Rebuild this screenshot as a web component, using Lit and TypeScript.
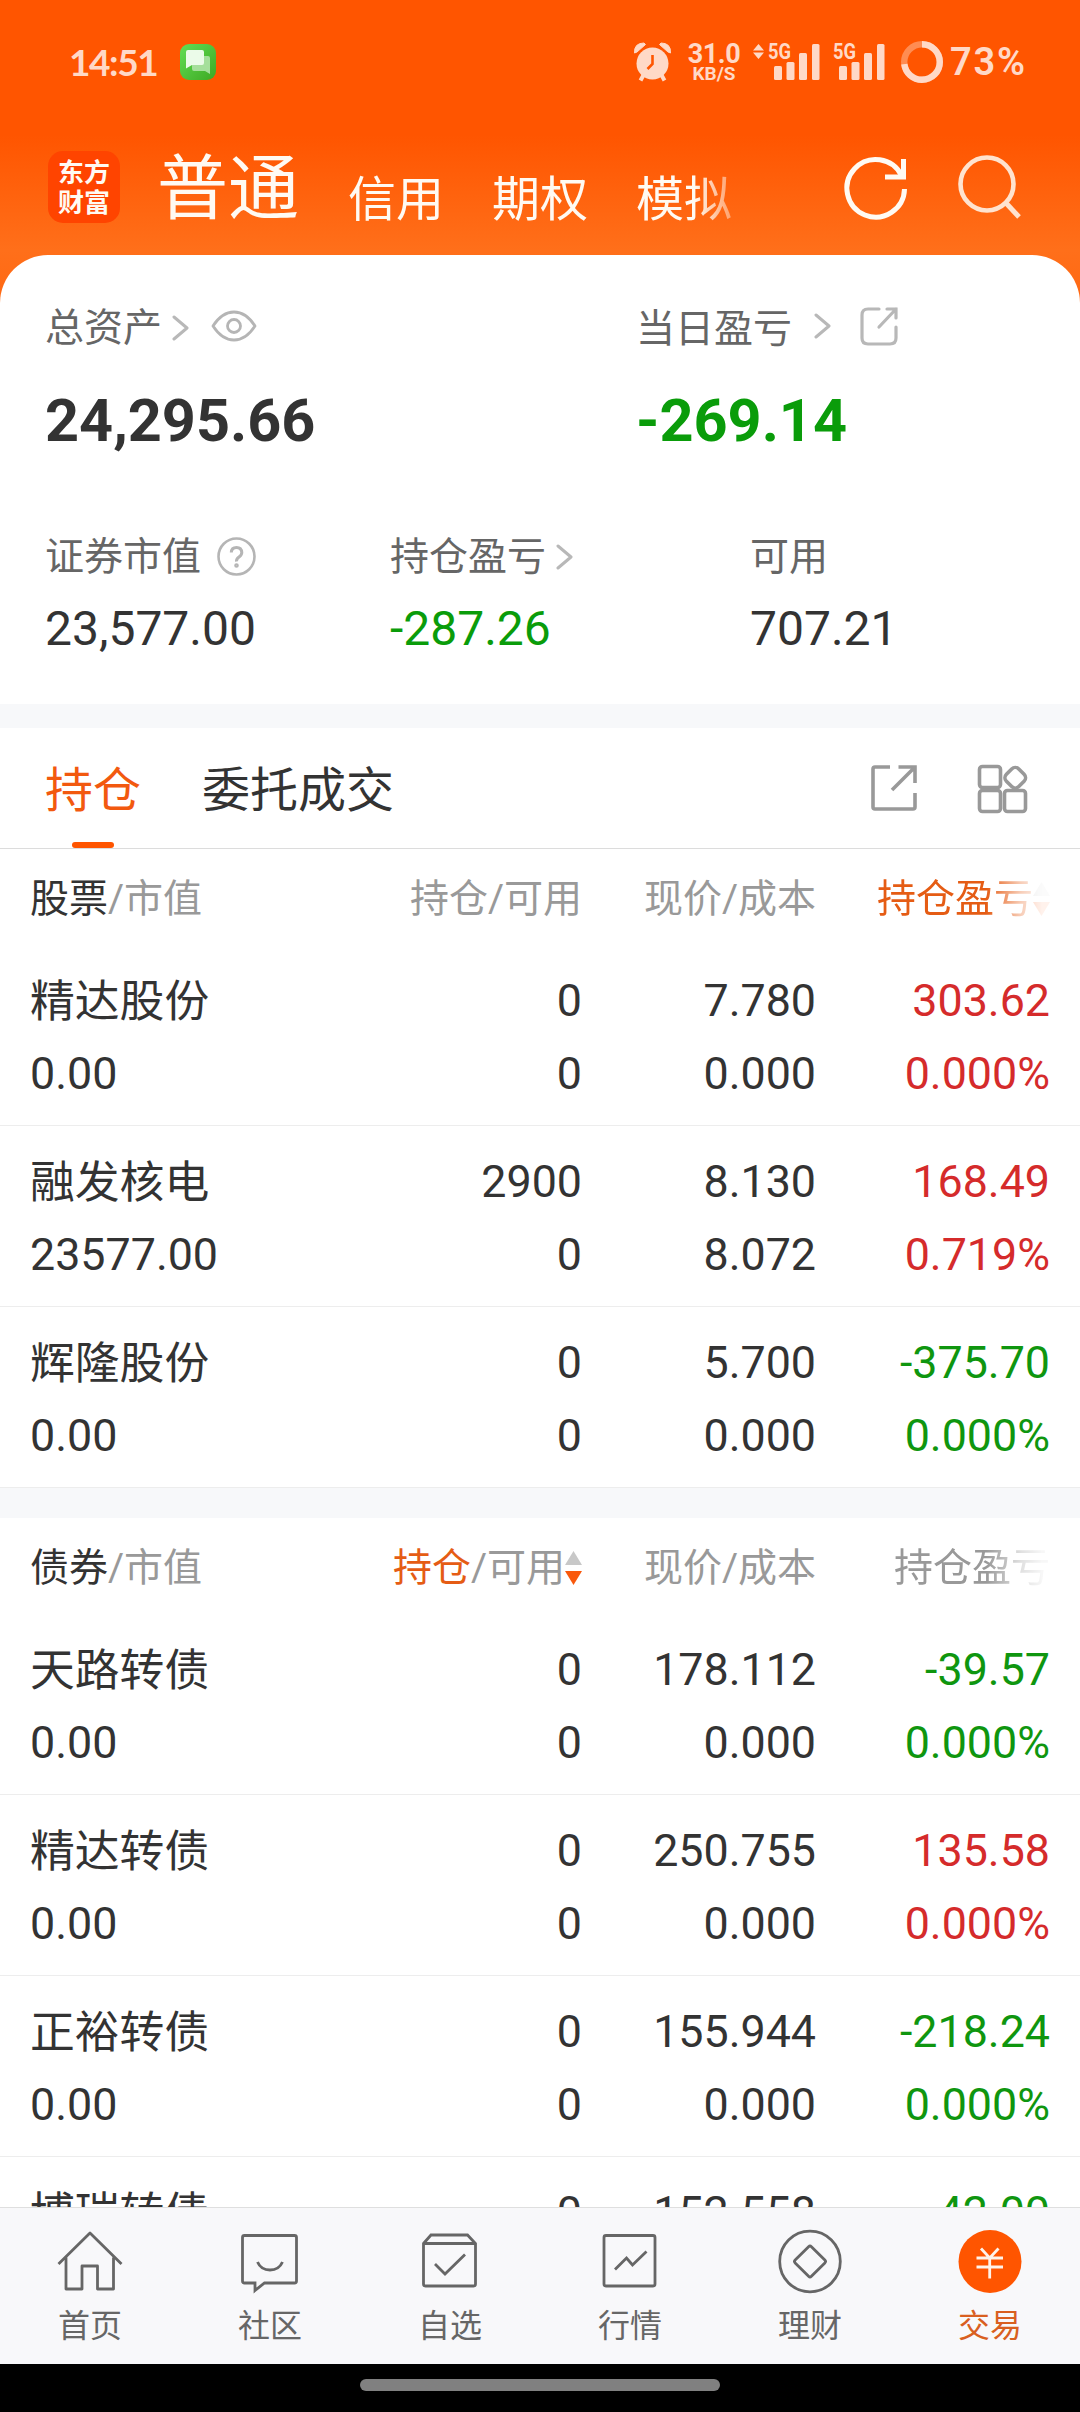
import { LitElement, html, svg, css, nothing } from "lit";
import { customElement, property } from "lit/decorators.js";
import { classMap } from "lit/directives/class-map.js";

type Tone = "up" | "down";

interface Holding {
  name: string;
  value: string;
  held: string;
  usable: string;
  price: string;
  cost: string;
  profit: string;
  rate: string;
  tone: Tone;
}

const row = (
  name: string, value: string, held: string, price: string, cost: string,
  profit: string, rate: string, tone: Tone, usable = "0",
): Holding => ({ name, value, held, usable, price, cost, profit, rate, tone });

const STOCKS: Holding[] = [
  row("精达股份", "0.00", "0", "7.780", "0.000", "303.62", "0.000%", "up"),
  row("融发核电", "23577.00", "2900", "8.130", "8.072", "168.49", "0.719%", "up"),
  row("辉隆股份", "0.00", "0", "5.700", "0.000", "-375.70", "0.000%", "down"),
];

const BONDS: Holding[] = [
  row("天路转债", "0.00", "0", "178.112", "0.000", "-39.57", "0.000%", "down"),
  row("精达转债", "0.00", "0", "250.755", "0.000", "135.58", "0.000%", "up"),
  row("正裕转债", "0.00", "0", "155.944", "0.000", "-218.24", "0.000%", "down"),
  row("博瑞转债", "", "0", "152.558", "", "-42.00", "", "down", ""),
];

const FONT = css`Roboto, "Noto Sans CJK SC", sans-serif`;

const chevron = html`<svg class="chevron" width="18" height="28" viewBox="0 0 18 28">
  <path d="M2 3 L15 14 L2 25" fill="none" stroke="#b8b8b8" stroke-width="3" stroke-linecap="round" stroke-linejoin="round"/>
</svg>`;

const sorter = html`<svg class="sorter" width="17" height="36" viewBox="0 0 17 36">
  <path d="M8.500 1 L17 15 H0Z" fill="#c8c8c8"/><path d="M8.500 35 L17 21 H0Z" fill="#f9590c"/>
</svg>`;

@customElement("status-bar")
export class StatusBar extends LitElement {
  static styles = css`
    :host { display: flex; align-items: flex-start; height: 84px; padding-top: 40px; box-sizing: border-box;
      color: #ffd9c7; font-family: Roboto, sans-serif; font-weight: 600; }
    svg { display: block; flex: none; }
    .time { width: 110px; margin-left: 69px; font: 700 37px/43px Lato, sans-serif; letter-spacing: -1.4px; }
    .chat { margin: 4px auto 0 1px; }
    .speed { width: 54px; margin: 2px 12px 0 14px; text-align: center; font-weight: 700; }
    .rate { font-size: 27px; line-height: 25px; letter-spacing: -0.4px; }
    .unit { font-size: 19px; line-height: 14px; }
    .ring { margin-left: 14px; }
    .second { margin-left: 11px; }
    .percent { width: 130px; margin-left: 6px; font: 600 38px/45px Roboto, sans-serif; letter-spacing: 1.8px; }
  `;

  private signal(arrows: boolean) {
    return svg`
      ${arrows ? svg`<path d="M5.500 4 L11 10.500 H0Z M5.500 19 L11 12.500 H0Z" fill="#ffd9c7"/>` : nothing}
      <text x="15" y="19" font-family="Roboto" font-size="22" font-weight="700" textLength="23" lengthAdjust="spacingAndGlyphs" fill="#ffd9c7">5G</text>
      <rect x="21" y="26" width="8" height="14" rx="1.500" fill="#ffd9c7"/>
      <rect x="33.500" y="22" width="8" height="18" rx="1.500" fill="#ffd9c7"/>
      <rect x="46" y="13" width="8" height="27" rx="1.500" fill="#ffd9c7"/>
      <rect x="59" y="4" width="7.500" height="36" rx="1.500" fill="#ffd9c7"/>`;
  }

  render() {
    return html`
      <div class="time">14:51</div>
      <svg class="chat" width="36" height="36" viewBox="0 0 36 36">
        <defs><linearGradient id="g" x1="0" y1="0" x2="1" y2="1"><stop offset="0" stop-color="#62de55"/><stop offset="1" stop-color="#3ea922"/></linearGradient></defs>
        <rect width="36" height="36" rx="9" fill="url(#g)"/>
        <path d="M13 12 H28 Q30 12 30 14 V30 L25 27 H14 Q12 27 12 25 V14Z" fill="#a5df9b"/>
        <path d="M8 6 H22 Q24 6 24 8 V19 Q24 21 22 21 H12 L6 24.500 V8 Q6 6 8 6Z" fill="#ebfbe9"/>
      </svg>
      <svg width="40" height="42" viewBox="0 0 40 42" fill="#ffd9c7">
        <path d="M1.500 13 Q1 3 11 3 L12.500 4.500 L4 12Z M37.500 13 Q38 3 28 3 L26.500 4.500 L35 12Z" stroke="#ffd9c7" stroke-linejoin="round"/>
        <path d="M10.500 35 L7.500 40.500 M28.500 35 L31.500 40.500" stroke="#ffd9c7" stroke-width="4"/>
        <circle cx="19.500" cy="23.500" r="16"/>
        <path d="M19.500 15 V24 L14.500 29" fill="none" stroke="#ff5500" stroke-width="2.600"/>
      </svg>
      <div class="speed"><div class="rate">31.0</div><div class="unit">KB/S</div></div>
      <svg width="68" height="42" viewBox="0 0 68 42">${this.signal(true)}</svg>
      <svg class="second" width="54" height="42" viewBox="14 0 54 42">${this.signal(false)}</svg>
      <svg class="ring" width="44" height="44" viewBox="0 0 44 44">
        <circle cx="22" cy="22" r="17.800" fill="none" stroke="#ff8c52" stroke-width="6.400"/>
        <circle cx="22" cy="22" r="17.800" fill="none" stroke="#ffd9c7" stroke-width="6.400" pathLength="100" stroke-dasharray="73 27" transform="rotate(-90 22 22)"/>
      </svg>
      <div class="percent">73%</div>`;
  }
}

@customElement("app-header")
export class AppHeader extends LitElement {
  static styles = css`
    :host { display: flex; align-items: flex-start; height: 171px; padding-left: 48px; box-sizing: border-box;
      color: #fffaf3; font-family: ${FONT}; }
    .logo { width: 72px; height: 72px; margin-top: 67px; border-radius: 15px; background: #ff4400; box-sizing: border-box;
      padding-top: 7px; text-align: center; font-size: 26px; line-height: 30px; font-weight: 700; }
    .modes { display: flex; align-items: flex-start; gap: 48px; margin: 54px 0 0 36px; width: 640px;
      -webkit-mask-image: linear-gradient(to right, #000 538px, transparent 600px);
      mask-image: linear-gradient(to right, #000 538px, transparent 600px); }
    .mode { padding-top: 13px; font-size: 48px; line-height: 98px; }
    .current { width: 144px; padding: 1px 0 0 1px; margin-right: -1px; font-size: 71px; line-height: 100px; }
    .icons { display: block; margin: 66px 0 0 44px; }
  `;

  render() {
    return html`
      <div class="logo">东方<br>财富</div>
      <div class="modes">
        <span class="mode current">普通</span><span class="mode">信用</span>
        <span class="mode">期权</span><span class="mode">模拟</span>
      </div>
      <svg class="icons" width="190" height="76" viewBox="840 150 190 76" fill="none">
        <path d="M904.500 189 A28.800 28.800 0 1 1 901.500 175.500" stroke="#fffaf3" stroke-width="5"/>
        <path d="M885 177 H903.500 V159" stroke="#fffaf3" stroke-width="5"/>
        <circle cx="987" cy="184" r="26.500" stroke="#ffe3cf" stroke-width="4.600"/>
        <path d="M1006 203 L1019 217" stroke="#ffe3cf" stroke-width="5"/>
      </svg>`;
  }
}

@customElement("asset-summary")
export class AssetSummary extends LitElement {
  static styles = css`
    :host { display: block; height: 449px; padding: 49px 0 0 45px; box-sizing: border-box; background: #fff;
      border-radius: 48px 48px 0 0; color: #333; font-family: ${FONT}; }
    .main { display: grid; grid-template-columns: 591px 1fr; }
    .sub { display: grid; grid-template-columns: 345px 360px 1fr; margin-top: 77px; }
    .label { display: flex; align-items: center; height: 48px; font-size: 39px; line-height: 48px; color: #666; }
    .big { margin-top: 34px; font-size: 59.4px; line-height: 70px; font-weight: 700; }
    .value { margin-top: 20px; font-size: 48px; line-height: 56px; }
    .down { color: #0a9c0a; }
    .chevron { margin-left: 10px; }
    .wide { padding-top: 1px; height: 47px; }
    .wide .chevron { margin-left: 22px; margin-bottom: 5px; }
    .eye { margin: 0 0 5px 21px; }
    .export { margin: 0 0 5px 27px; }
    .help { margin-left: 14px; }
  `;

  render() {
    return html`
      <div class="main">
        <div>
          <div class="label">总资产${chevron}
            <svg class="eye" width="46" height="34" viewBox="0 0 46 34" fill="none" stroke="#b5b5b5" stroke-width="2.800">
              <path d="M2 17 Q11 3 23 3 T44 17 Q35 31 23 31 T2 17Z" stroke-linejoin="round"/><circle cx="23" cy="17" r="6.500"/>
            </svg>
          </div>
          <div class="big">24,295.66</div>
        </div>
        <div>
          <div class="label wide">当日盈亏${chevron}
            <svg class="export" width="40" height="40" viewBox="0 0 40 40" fill="none" stroke="#b8b8b8" stroke-width="3.200" stroke-linecap="round">
              <path d="M20 3 H9 Q3 3 3 9 V32 Q3 38 9 38 H31 Q37 38 37 32 V21"/>
              <path d="M28 3 H37 V12 M37 3 L20 21"/>
            </svg>
          </div>
          <div class="big down">-269.14</div>
        </div>
      </div>
      <div class="sub">
        <div>
          <div class="label">证券市值
            <svg class="help" width="42" height="42" viewBox="0 0 42 42" fill="none" stroke="#b5b5b5" stroke-width="2.600">
              <circle cx="21.500" cy="20.500" r="18"/>
              <path d="M16.300 16.500 Q16.500 11.500 21.500 11.500 T26.800 16.500 Q26.800 19 24 21 T21.500 25.500" stroke-width="3"/>
              <circle cx="21.500" cy="29.500" r="1" />
            </svg>
          </div>
          <div class="value">23,577.00</div>
        </div>
        <div><div class="label">持仓盈亏${chevron}</div><div class="value down">-287.26</div></div>
        <div><div class="label">可用</div><div class="value">707.21</div></div>
      </div>`;
  }
}

@customElement("position-tabs")
export class PositionTabs extends LitElement {
  static styles = css`
    :host { display: flex; height: 121px; padding: 0 50px 0 45px; box-sizing: border-box; background: #fff;
      border-bottom: 1px solid #dcdcdc; font-family: ${FONT}; color: #333; }
    .tab { display: flex; flex-direction: column; align-items: center; padding-top: 35px; margin-right: 61px;
      font-size: 48px; line-height: 56px; }
    .active { color: #f2590f; }
    .bar { width: 42px; height: 6px; margin-top: 23px; border-radius: 3px; background: #ff5500; }
    .tools { margin: 34px 0 0 auto; }
  `;

  render() {
    return html`
      <div class="tab active">持仓<span class="bar"></span></div>
      <div class="tab">委托成交</div>
      <svg class="tools" width="162" height="54" viewBox="868 762 162 54" fill="none" stroke="#999" stroke-width="3.600">
        <path d="M890 767 H875 Q873 767 873 769 V807 Q873 809 875 809 H913 Q915 809 915 807 V793"/>
        <path d="M898.500 767 H915 V783 M915 767 L892 790"/>
        <rect x="979.500" y="766.500" width="21" height="21" rx="3"/>
        <rect x="979.500" y="790.500" width="21" height="21" rx="3"/>
        <rect x="1004.500" y="790.500" width="21" height="21" rx="3"/>
        <rect x="1006.500" y="769" width="17.500" height="17.500" rx="5" transform="rotate(45 1015.250 777.750)"/>
      </svg>`;
  }
}

@customElement("holding-table")
export class HoldingTable extends LitElement {
  @property() kind = "";
  @property() sorted = "";
  @property({ attribute: false }) rows: Holding[] = [];

  static styles = css`
    :host { display: block; background: #fff; color: #333; font-family: ${FONT}; }
    .head, .row { display: grid; grid-template-columns: 250px 302px 234px 234px; padding: 0 30px; }
    .head { height: 96px; align-items: center; font-size: 39px; line-height: 48px; color: #999; padding-top: 4px; box-sizing: border-box; }
    .kind { color: #333; }
    .cell { text-align: right; }
    .head .cell { display: flex; justify-content: flex-end; align-items: center; }
    .on { color: #e55c14; }
    .fade { -webkit-mask-image: linear-gradient(to right, #000 170px, rgba(0,0,0,.3) 205px, rgba(0,0,0,.08) 226px);
      mask-image: linear-gradient(to right, #000 170px, rgba(0,0,0,.3) 205px, rgba(0,0,0,.08) 226px); }
    .row { height: 181px; padding-top: 19px; box-sizing: border-box; border-bottom: 1px solid #ededed; font-size: 44.8px; line-height: 73px; }
    .name { padding-top: 3px; line-height: 70px; }
    .up { color: #d52b2b; }
    .down { color: #0f960f; }
  `;

  render() {
    const byHeld = this.sorted === "held";
    const byProfit = this.sorted === "profit";
    return html`
      <div class="head">
        <div><span class="kind">${this.kind}</span>/市值</div>
        <div class="cell"><span class=${classMap({ on: byHeld })}>持仓</span>/可用${byHeld ? sorter : nothing}</div>
        <div class="cell">现价/成本</div>
        <div class="cell fade"><span class=${classMap({ on: byProfit })}>持仓盈亏</span>${byProfit ? sorter : nothing}</div>
      </div>
      ${this.rows.map((r) => html`
        <div class="row">
          <div><div class="name">${r.name}</div>${r.value}</div>
          <div class="cell">${r.held}<br>${r.usable}</div>
          <div class="cell">${r.price}<br>${r.cost}</div>
          <div class="cell ${r.tone}">${r.profit}<br>${r.rate}</div>
        </div>`)}`;
  }
}

const NAV = [
  { label: "首页", icon: svg`<path d="M4.500 39 L36 8 L67.500 39 M12 32.500 V64 H28 V41 H43.500 V64 H59.500 V32.500" stroke-linejoin="round"/>` },
  { label: "社区", icon: svg`<path d="M10.500 10.500 H60.500 Q62.500 10.500 62.500 12.500 V56 Q62.500 58 60.500 58 H30.500 L21 65.500 V58 H10.500 Q8.500 58 8.500 56 V12.500 Q8.500 10.500 10.500 10.500Z M23.500 37 Q27 45 36 45 T48.500 37"/>` },
  { label: "自选", icon: svg`<path d="M9.500 18.500 L17 10 H53.500 L61.500 18.500 V59 Q61.500 61 59.500 61 H11.500 Q9.500 61 9.500 59Z M9.500 18.500 H61.500 M21 39 L31 49 L51 29.500"/>` },
  { label: "行情", icon: svg`<rect x="10" y="10.500" width="51" height="50.500" rx="2"/><path d="M21 44.500 L32.500 33 L38.500 40 L52.500 26.500"/>` },
  { label: "理财", icon: svg`<circle cx="36" cy="36.500" r="30.300"/><rect x="24.500" y="25" width="23" height="23" rx="2" transform="rotate(45 36 36.500)"/>` },
  { label: "交易", icon: svg`<circle cx="36" cy="36.500" r="31.500" fill="#ff5500" stroke="none"/><path d="M27 23.500 L35.700 33 L44.500 23.500 M22.500 33 H49 M22.500 42 H49 M35.700 33 V53.500" stroke="#fff3ea"/>` },
];

@customElement("bottom-nav")
export class BottomNav extends LitElement {
  static styles = css`
    :host { display: grid; grid-template-columns: repeat(6, 1fr); height: 157px; box-sizing: border-box; background: #f8f8fa;
      border-top: 1px solid #dfdfdf; padding-top: 17px; font-family: ${FONT}; color: #666; }
    .item { display: flex; flex-direction: column; align-items: center; font-size: 32px; line-height: 40px; }
    .icon { display: block; margin-bottom: 9px; }
    .active { color: #d95f20; }
  `;

  render() {
    return html`${NAV.map((n, i) => html`
      <div class=${classMap({ item: true, active: i === 5 })}>
        <svg class="icon" width="72" height="72" viewBox="0 0 72 72" fill="none" stroke="#666" stroke-width="2.800">${n.icon}</svg>
        ${n.label}
      </div>`)}`;
  }
}

@customElement("app-root")
export class AppRoot extends LitElement {
  static styles = css`
    :host { display: flex; flex-direction: column; width: 1080px; height: 2412px; overflow: hidden;
      background: linear-gradient(to bottom, #ff5500 0, #ff5500 135px, #ff6f1a 250px, #ff6812 304px, #fff 304px); }
    .summary, .tabs, .bottom { flex: none; }
    .band { flex: none; height: 24px; background: #f7f8fa; }
    .list { flex: 1; min-height: 0; overflow: hidden; background: #fff; }
    .gap { height: 30px; background: #f7f8fa; }
    .home { flex: none; display: flex; justify-content: center; height: 48px; padding-top: 15px; box-sizing: border-box; background: #000; }
    .pill { width: 360px; height: 12px; border-radius: 6px; background: #808080; }
  `;

  render() {
    return html`
      <status-bar></status-bar>
      <app-header></app-header>
      <asset-summary class="summary"></asset-summary>
      <div class="band"></div>
      <position-tabs class="tabs"></position-tabs>
      <div class="list">
        <holding-table kind="股票" sorted="profit" .rows=${STOCKS}></holding-table>
        <div class="gap"></div>
        <holding-table kind="债券" sorted="held" .rows=${BONDS}></holding-table>
      </div>
      <bottom-nav class="bottom"></bottom-nav>
      <div class="home"><div class="pill"></div></div>`;
  }
}
